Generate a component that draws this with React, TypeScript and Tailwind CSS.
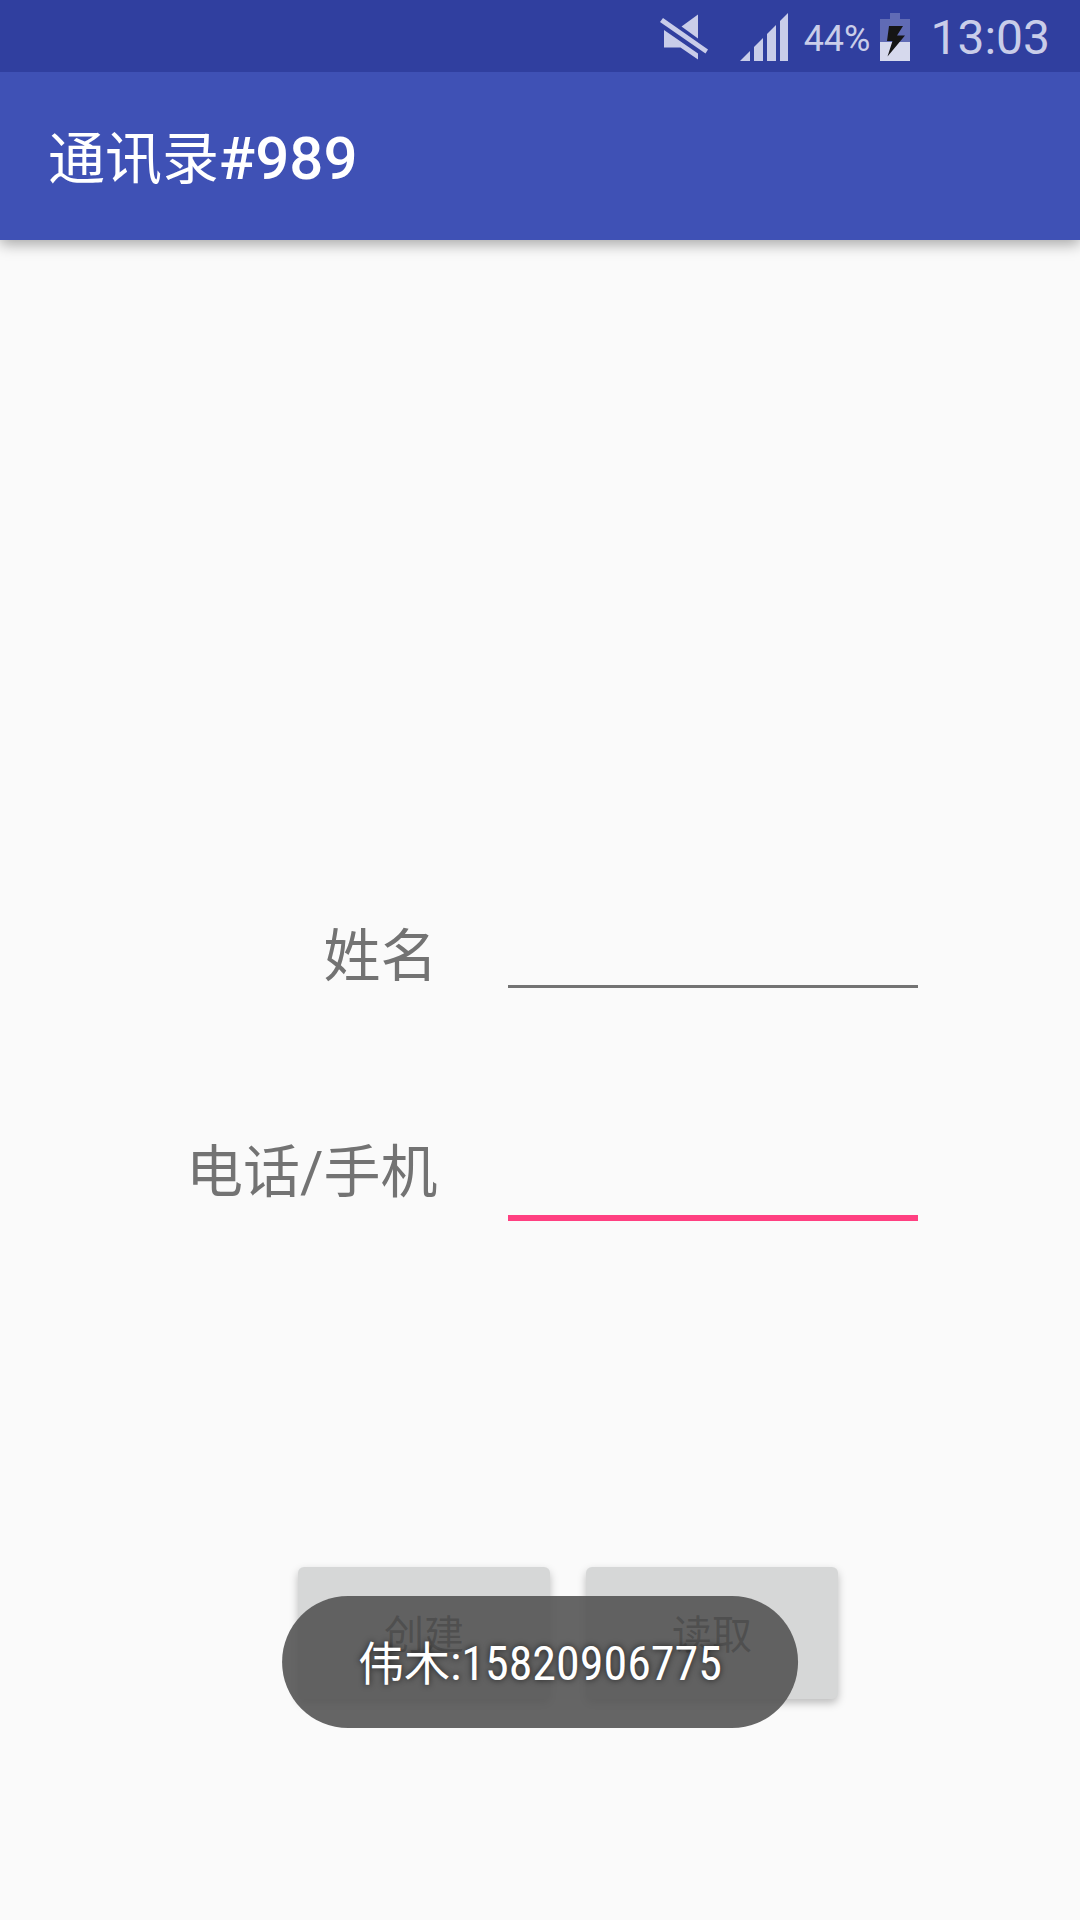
import React from "react";

function MuteIcon() {
  return (
    <svg viewBox="0 0 48 46" className="h-[46px] w-12" fill="currentColor" aria-hidden="true">
      <path d="M38 0.5V24.5L21.5 12.5Z" />
      <path d="M4 16L38 39.5V45.5L20.5 33.5H4Z" />
      <path d="M3 4L48 35.5L45.5 39.5L0 8Z" />
    </svg>
  );
}

function SignalIcon() {
  return (
    <svg viewBox="0 0 48 48" className="h-12 w-12" fill="currentColor" aria-hidden="true">
      <path d="M0 48L10 38V48Z" />
      <path d="M14 34L23 25V48H14Z" />
      <path d="M27 21L36 12V48H27Z" />
      <path d="M40 8L48 0V48H40Z" />
    </svg>
  );
}

function BatteryIcon() {
  return (
    <svg viewBox="0 0 30 48" className="h-12 w-[30px]" aria-hidden="true">
      <path d="M10 0H20V6H30V29H0V6H10Z" fill="#606bb5" />
      <path d="M0 29H30V48H0Z" fill="#d6d9ed" />
      <path d="M9 13H23L17 22.5H25L7.5 43.5L12.5 28H7Z" fill="#151515" />
    </svg>
  );
}

function StatusBar() {
  return (
    <div className="relative z-10 flex h-[72px] items-center justify-end bg-[#303f9f] pr-[30px] pt-0.5 text-[#c9cde9]">
      <MuteIcon />
      <div className="ml-8">
        <SignalIcon />
      </div>
      <span className="ml-4 pt-1 text-[36px] leading-none">44%</span>
      <div className="ml-2.5">
        <BatteryIcon />
      </div>
      <span className="ml-5 pt-0.5 text-[48px] leading-none">13:03</span>
    </div>
  );
}

function Field({ id, label, type, focused }: { id: string; label: string; type: string; focused?: boolean }) {
  return (
    <div className="flex h-[132px] items-center">
      <label htmlFor={id} className="w-[47%] pt-1.5 pr-[70px] text-right text-[57px] leading-[84px] text-[#737373]">
        {label}
      </label>
      <input
        id={id}
        type={type}
        className={
          focused
            ? "h-[102px] w-[38%] border-b-6 border-[#ff4081] bg-transparent text-[54px] outline-none"
            : "h-[68px] w-[38%] border-b-3 border-[#737373] bg-transparent text-[54px] outline-none"
        }
      />
    </div>
  );
}

function RaisedButton({ children }: { children: React.ReactNode }) {
  return (
    <button
      type="button"
      className="h-[132px] w-[252px] rounded-md bg-[#d6d7d7] pt-1.5 text-[40px] text-[#212121] shadow-[0_4px_8px_rgba(0,0,0,0.25)]"
    >
      {children}
    </button>
  );
}

export default function App() {
  return (
    <div className="flex min-h-screen flex-col bg-[#fafafa] font-[Roboto,'Noto_Sans_CJK_SC',sans-serif]">
      <StatusBar />
      <header className="flex h-[168px] items-center bg-[#3f51b5] px-12 pt-1.5 text-white shadow-[0_4px_14px_rgba(0,0,0,0.35)]">
        <h1 className="text-[60px] leading-[84px]">
          <span className="text-[57px]">通讯录</span>
          <span className="font-medium">#989</span>
        </h1>
      </header>
      <main className="flex flex-1 flex-col pt-[648px]">
        <form className="flex flex-col">
          <div className="flex flex-col gap-[84px]">
            <Field id="name" label="姓名" type="text" />
            <Field id="phone" label="电话/手机" type="tel" focused />
          </div>
          <div className="relative mt-[331px] flex justify-center gap-9 pl-14">
            <RaisedButton>创建</RaisedButton>
            <RaisedButton>读取</RaisedButton>
            <div
              role="status"
              className="absolute left-1/2 top-[29px] flex h-[132px] -translate-x-1/2 items-center whitespace-nowrap rounded-full bg-[#545454]/90 px-[76px] pt-1 font-['Roboto_Condensed',Roboto,'Noto_Sans_CJK_SC',sans-serif] text-[48px] text-white [text-shadow:0_0_6px_rgba(0,0,0,0.7)]"
            >
              <span className="text-[46px]">伟木</span>
              <span>:15820906775</span>
            </div>
          </div>
        </form>
      </main>
    </div>
  );
}
